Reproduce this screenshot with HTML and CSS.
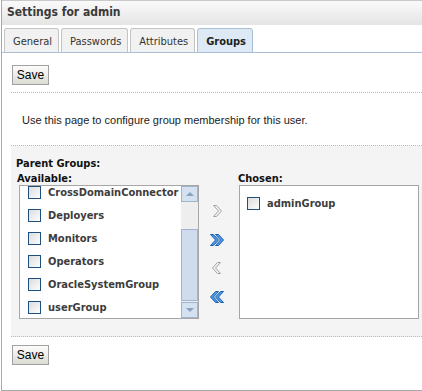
FILE: index.html
```html
<!DOCTYPE html>
<html lang="en">
<head>
  <meta charset="UTF-8">
  <title>Settings for admin</title>
  <link rel="stylesheet" href="styles.css">
</head>
<body>
  <div class="page">
    <div class="title-bar">Settings for admin</div>

    <div class="tabs">
      <div class="tab">General</div>
      <div class="tab">Passwords</div>
      <div class="tab">Attributes</div>
      <div class="tab active">Groups</div>
    </div>

    <div class="content">
      <div class="button-row top">
        <button class="btn">Save</button>
      </div>

      <p class="intro">Use this page to configure group membership for this user.</p>

      <div class="groups">
        <div class="groups-title">Parent Groups:</div>
        <div class="shuttle">
          <div class="shuttle-col">
            <div class="list-label">Available:</div>
            <div class="list-box">
              <ul class="items scrolled">
                <li><span class="check"></span>CrossDomainConnector</li>
                <li><span class="check"></span>Deployers</li>
                <li><span class="check"></span>Monitors</li>
                <li><span class="check"></span>Operators</li>
                <li><span class="check"></span>OracleSystemGroup</li>
                <li><span class="check"></span>userGroup</li>
              </ul>
              <div class="scrollbar">
                <div class="sb-btn"><span class="sb-up"></span></div>
                <div class="sb-track">
                  <div class="sb-thumb"></div>
                </div>
                <div class="sb-btn"><span class="sb-down"></span></div>
              </div>
            </div>
          </div>

          <div class="moves">
            <!-- move selected -->
            <svg class="move" width="16" height="14" viewBox="0 0 16 14">
              <polygon points="4.5,1.5 7.5,1.5 12.5,7 7.5,12.5 4.5,12.5 9.5,7" fill="#f4f4f4" stroke="#a3a3a3"/>
            </svg>
            <!-- move all -->
            <svg class="move" width="16" height="14" viewBox="0 0 16 14">
              <polygon points="1.5,1.5 4.5,1.5 9.5,7 4.5,12.5 1.5,12.5 6.5,7" fill="#4f9ae6" stroke="#1f5fae"/>
              <polygon points="6.5,1.5 9.5,1.5 14.5,7 9.5,12.5 6.5,12.5 11.5,7" fill="#4f9ae6" stroke="#1f5fae"/>
            </svg>
            <!-- remove selected -->
            <svg class="move" width="16" height="14" viewBox="0 0 16 14">
              <polygon points="11.5,1.5 8.5,1.5 3.5,7 8.5,12.5 11.5,12.5 6.5,7" fill="#f4f4f4" stroke="#a3a3a3"/>
            </svg>
            <!-- remove all -->
            <svg class="move" width="16" height="14" viewBox="0 0 16 14">
              <polygon points="9.5,1.5 6.5,1.5 1.5,7 6.5,12.5 9.5,12.5 4.5,7" fill="#4f9ae6" stroke="#1f5fae"/>
              <polygon points="14.5,1.5 11.5,1.5 6.5,7 11.5,12.5 14.5,12.5 9.5,7" fill="#4f9ae6" stroke="#1f5fae"/>
            </svg>
          </div>

          <div class="shuttle-col chosen">
            <div class="list-label">Chosen:</div>
            <div class="list-box">
              <ul class="items">
                <li><span class="check"></span>adminGroup</li>
              </ul>
            </div>
          </div>
        </div>
      </div>

      <div class="button-row bottom">
        <button class="btn">Save</button>
      </div>
    </div>
  </div>
</body>
</html>
```

FILE: styles.css
```css
* {
  box-sizing: border-box;
  margin: 0;
  padding: 0;
}

body {
  background: white;
  font-family: 'DejaVu Sans Condensed', 'DejaVu Sans', sans-serif;
  font-size: 11px;
  color: #333;
}

.page {
  margin-left: 1px;
  height: 391px;
  border-left: 1px solid #a8a8a8;
  border-bottom: 1px solid #a8a8a8;
  overflow: hidden;
}

.title-bar {
  height: 25px;
  padding: 4px 0 0 5px;
  border-top: 1px solid #c9c9c9;
  background: linear-gradient(to bottom, #fafafa, #e4e4e4);
  font-weight: bold;
  font-size: 12px;
  color: #3a3a3a;
}

/* onglets */
.tabs {
  display: flex;
  gap: 2px;
  margin-top: 3px;
  padding-left: 2px;
  border-bottom: 1px solid #a9bfd6;
}

.tab {
  height: 25px;
  padding: 6px 6px 0 8px;
  margin-bottom: -1px;
  border: 1px solid #c4c4c4;
  border-bottom-color: #a9bfd6;
  border-radius: 3px 3px 0 0;
  background: #f1f1f1;
  color: #333;
  font-size: 11px;
}

.tab.active {
  background: #dde9f4;
  border-color: #a9bfd6;
  font-weight: bold;
  color: #222;
}

.content {
  padding-left: 9px;
}

.button-row.top {
  padding: 12px 0 7px 1px;
  border-bottom: 1px dotted #b8b8b8;
}

.button-row.bottom {
  padding: 8px 0 0 1px;
}

.btn {
  display: block;
  height: 20px;
  width: 37px;
  border: 1px solid #a0a0a0;
  background: linear-gradient(to bottom, #fdfdfd, #dcdcd4);
  font-family: 'Liberation Sans', Arial, sans-serif;
  font-size: 12px;
  color: #000;
}

.intro {
  padding: 21px 0 18px 11px;
  border-bottom: 1px dotted #b8b8b8;
  font-family: 'Liberation Sans', Arial, sans-serif;
  font-size: 11px;
  line-height: 13px;
  color: #222;
}

/* zone des groupes */
.groups {
  background: #f4f4f4;
  height: 191px;
  padding: 11px 0 0 4px;
  border-bottom: 1px dotted #b8b8b8;
}

.groups-title,
.list-label {
  font-weight: bold;
  color: #111;
  line-height: 13px;
}

.groups-title {
  margin-left: 1px;
}

.list-label {
  margin: 2px 0 0 2px;
}

.shuttle {
  display: flex;
}

.shuttle-col {
  width: 183px;
}

.shuttle-col.chosen {
  width: 181px;
}

.list-box {
  display: flex;
  height: 134px;
  width: 180px;
  margin-left: 4px;
  border: 1px solid #a6a6a6;
  background: white;
  overflow: hidden;
}

.chosen .list-box {
  margin-left: 1px;
}

.chosen .list-label {
  margin-left: 0;
}

.items {
  flex: 1;
  list-style: none;
  overflow: hidden;
  padding: 6px 0 0 7px;
}

.items.scrolled {
  padding: 0 0 0 8px;
  margin-top: -5px;
}

.items li {
  display: flex;
  align-items: center;
  height: 23px;
  white-space: nowrap;
  font-weight: bold;
  font-size: 11px;
  color: #3d3d3d;
}

.check {
  flex: none;
  width: 13px;
  height: 13px;
  margin-right: 7px;
  border: 1px solid #1f4f7f;
  background: linear-gradient(135deg, #dcdcdc, #fdfdfd);
}

.scrollbar {
  flex: none;
  width: 17px;
  display: flex;
  flex-direction: column;
  background: #eeeeee;
}

.sb-btn {
  height: 16px;
  border: 1px solid #9fb4cd;
  background: #d4e1f1;
  display: flex;
  align-items: center;
  justify-content: center;
}

.sb-up,
.sb-down {
  width: 0;
  height: 0;
  border-left: 4px solid transparent;
  border-right: 4px solid transparent;
}

.sb-up {
  border-bottom: 4px solid #8aa2bd;
}

.sb-down {
  border-top: 4px solid #8aa2bd;
}

.sb-track {
  flex: 1;
  display: flex;
  flex-direction: column;
  justify-content: flex-end;
  padding-bottom: 1px;
}

.sb-thumb {
  height: 72px;
  border: 1px solid #9fb4cd;
  background: #cfdcee;
}

.moves {
  width: 40px;
  padding-top: 34px;
  display: flex;
  flex-direction: column;
  align-items: center;
  gap: 14.5px;
}

.move {
  display: block;
  margin-left: -2px;
}
```
